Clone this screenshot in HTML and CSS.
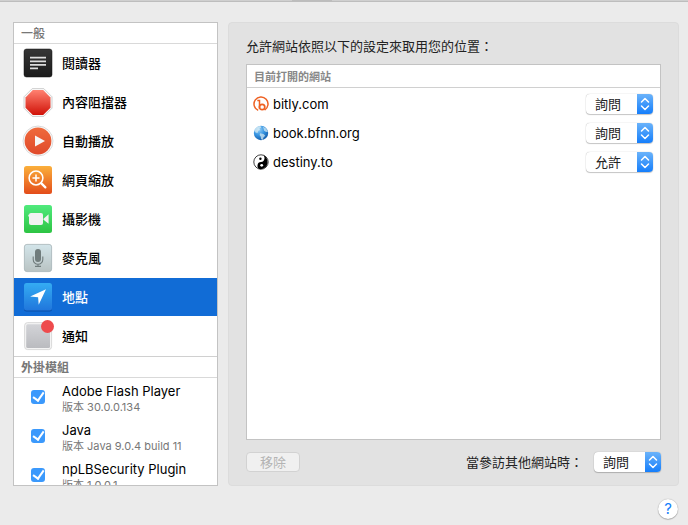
FILE: index.html
```html
<!DOCTYPE html>
<html lang="zh-Hant">
<head>
    <meta charset="UTF-8">
    <meta name="viewport" content="width=device-width, initial-scale=1.0">
    <title>網站</title>
    <link rel="stylesheet" href="styles.css">
</head>
<body>
    <div class="toolbar-edge"><span class="active-tab"></span></div>

    <div class="content">
        <nav class="sidebar">
            <h2 class="section-title">一般</h2>
            <ul class="settings">
                <li><a href="#reader">
                    <svg class="icon" viewBox="0 0 32 32" aria-hidden="true">
                        <defs><linearGradient id="gReader" x2="0" y2="1"><stop offset="0" stop-color="#363636"/><stop offset="1" stop-color="#1b1b1b"/></linearGradient></defs>
                        <rect x="2" y="2" width="28" height="28" rx="2.5" fill="url(#gReader)" stroke="#111" stroke-width=".5"/>
                        <path d="M8 10.7h16M8 14.3h16M8 17.9h16M8 21.4h8" stroke="#dedede" stroke-width="1.7"/>
                    </svg>
                    閱讀器</a></li>
                <li><a href="#blocker">
                    <svg class="icon" viewBox="0 0 32 32" aria-hidden="true">
                        <defs><linearGradient id="gStop" x2="0" y2="1"><stop offset="0" stop-color="#ff8170"/><stop offset="1" stop-color="#d01208"/></linearGradient></defs>
                        <path d="M10.2 2.6h11.6l8.2 8.2v11.4l-8.2 8.2H10.2L2 22.2V10.8z" fill="#fafafa" stroke="#c4c4c4" stroke-width=".8"/>
                        <path d="M10.8 4.1h10.4l7.3 7.3v10.3L21.2 29H10.8l-7.3-7.3V11.4z" fill="url(#gStop)"/>
                    </svg>
                    內容阻擋器</a></li>
                <li><a href="#autoplay">
                    <svg class="icon" viewBox="0 0 32 32" aria-hidden="true">
                        <defs><linearGradient id="gPlay" x2="0" y2="1"><stop offset="0" stop-color="#ef6a3c"/><stop offset="1" stop-color="#e04a2b"/></linearGradient></defs>
                        <circle cx="16" cy="16" r="15" fill="#fafafa" stroke="#d2d2d2" stroke-width=".8"/>
                        <circle cx="16" cy="16" r="13.4" fill="url(#gPlay)"/>
                        <path d="M13 10.5v11l10-5.5z" fill="#f6f6f6"/>
                    </svg>
                    自動播放</a></li>
                <li><a href="#zoom">
                    <svg class="icon" viewBox="0 0 32 32" aria-hidden="true">
                        <defs><linearGradient id="gZoom" x2="0" y2="1"><stop offset="0" stop-color="#fbb03b"/><stop offset="1" stop-color="#e34c1a"/></linearGradient></defs>
                        <rect x="2" y="2" width="28" height="28" rx="2.5" fill="url(#gZoom)"/>
                        <g fill="none" stroke="#fff" stroke-linecap="round">
                            <circle cx="14" cy="14" r="6.9" stroke-width="1.5"/>
                            <path d="M14 11v6M11 14h6" stroke-width="1.5"/>
                            <path d="M19.4 19.4l4 4" stroke-width="2.2"/>
                        </g>
                    </svg>
                    網頁縮放</a></li>
                <li><a href="#camera">
                    <svg class="icon" viewBox="0 0 32 32" aria-hidden="true">
                        <defs><linearGradient id="gCam" x2="0" y2="1"><stop offset="0" stop-color="#50ea7d"/><stop offset="1" stop-color="#2dc443"/></linearGradient></defs>
                        <rect x="2" y="2" width="28" height="28" rx="2.5" fill="url(#gCam)"/>
                        <rect x="7" y="10" width="14" height="12" rx="2" fill="#f2f2f2"/>
                        <path d="M6.3 11.8h2v1.6h-2zM21.5 15.7l5.1-4.5v9.6l-5.1-4.1z" fill="#f2f2f2"/>
                    </svg>
                    攝影機</a></li>
                <li><a href="#microphone">
                    <svg class="icon" viewBox="0 0 32 32" aria-hidden="true">
                        <defs><linearGradient id="gMic" x2="0" y2="1"><stop offset="0" stop-color="#d3e5ea"/><stop offset="1" stop-color="#b9c3c3"/></linearGradient></defs>
                        <rect x="2.4" y="2.4" width="27.2" height="27.2" rx="2.5" fill="url(#gMic)" stroke="#a4b3b6" stroke-width=".8"/>
                        <rect x="13" y="7" width="6" height="13" rx="3" fill="#707c7c"/>
                        <path d="M11.2 14.5v3a4.8 4.8 0 0 0 9.6 0v-3M16 22.3v2M13 24.4h6" fill="none" stroke="#707c7c" stroke-width="1.1"/>
                    </svg>
                    麥克風</a></li>
                <li><a class="selected" href="#location" aria-current="page">
                    <svg class="icon" viewBox="0 0 32 32" aria-hidden="true">
                        <defs><linearGradient id="gLoc" x2="0" y2="1"><stop offset="0" stop-color="#34acf3"/><stop offset="1" stop-color="#2076dc"/></linearGradient></defs>
                        <rect x="2" y="2.6" width="28" height="28" rx="2.5" fill="#0b4ea6"/>
                        <rect x="2" y="2" width="28" height="27.6" rx="2.5" fill="url(#gLoc)"/>
                        <path d="M24 8.2L8.2 15.5l7.9.8.6 7.5z" fill="#fff"/>
                    </svg>
                    地點</a></li>
                <li><a href="#notifications">
                    <svg class="icon" viewBox="0 0 32 32" aria-hidden="true">
                        <defs><linearGradient id="gNote" x2="0" y2="1"><stop offset="0" stop-color="#d3d4d8"/><stop offset="1" stop-color="#babbbf"/></linearGradient></defs>
                        <rect x="2.6" y="2.6" width="27" height="27" rx="3" fill="#f4f4f4" stroke="#d0d0d0" stroke-width=".8"/>
                        <rect x="4.2" y="4.2" width="23.8" height="23.8" rx="1.5" fill="url(#gNote)"/>
                        <circle cx="25.5" cy="6.5" r="6.5" fill="#ee4b4d"/>
                    </svg>
                    通知</a></li>
            </ul>

            <h2 class="section-title divided">外掛模組</h2>
            <ul class="plugins">
                <li>
                    <input type="checkbox" id="flash" checked>
                    <label for="flash">Adobe Flash Player<small>版本 30.0.0.134</small></label>
                </li>
                <li>
                    <input type="checkbox" id="java" checked>
                    <label for="java">Java<small>版本 Java 9.0.4 build 11</small></label>
                </li>
                <li>
                    <input type="checkbox" id="nplb" checked>
                    <label for="nplb">npLBSecurity Plugin<small>版本 1.0.0.1</small></label>
                </li>
            </ul>
        </nav>

        <main class="panel">
            <h1>允許網站依照以下的設定來取用您的位置：</h1>

            <div class="site-list">
                <table>
                    <thead>
                        <tr><th colspan="2">目前打開的網站</th></tr>
                    </thead>
                    <tbody>
                        <tr>
                            <td>
                                <label class="site" for="bitly">
                                    <svg class="favicon" viewBox="0 0 16 16" aria-hidden="true">
                                        <g fill="none" stroke="#ee6123">
                                            <path d="M5.2 14.4A7 7 0 1 1 11.6 14" stroke-width="1.5"/>
                                            <path d="M4.3 4.5h2.2v8.2" stroke-width="1.5"/>
                                            <circle cx="9.1" cy="11" r="2.7" stroke-width="1.7"/>
                                        </g>
                                    </svg>
                                    bitly.com
                                </label>
                            </td>
                            <td><span class="popup"><select id="bitly"><option>詢問</option><option>拒絕</option><option>允許</option></select><svg viewBox="0 0 16 20" aria-hidden="true"><path d="M4.5 8L8 4.5 11.500 8M4.500 12L8 15.500 11.500 12"/></svg></span></td>
                        </tr>
                        <tr>
                            <td>
                                <label class="site" for="book">
                                    <svg class="favicon" viewBox="0 0 16 16" aria-hidden="true">
                                        <defs><radialGradient id="gGlobe" cx=".35" cy=".25" r=".8"><stop offset="0" stop-color="#9bd3f8"/><stop offset=".5" stop-color="#3795e2"/><stop offset="1" stop-color="#125ba9"/></radialGradient></defs>
                                        <circle cx="8" cy="8" r="7.2" fill="url(#gGlobe)"/>
                                        <path d="M1.3 5.5C2.2 2.9 4.8 1 7.4 1l.8 1.5-1.8 1 .6 1.6-1.7.6L4.5 8l-2-.4zM7.3 8.2l3.2.8 1.8 1.7-1.7 1.6-1 2.6-1.6-.9-.2-2.3-1.3-1.6zM10 1.7l3.2 1.8 1.7 3.3-1.8.2-2-1.3-.4-1.8z" fill="#dff0f4" opacity=".7"/>
                                    </svg>
                                    book.bfnn.org
                                </label>
                            </td>
                            <td><span class="popup"><select id="book"><option>詢問</option><option>拒絕</option><option>允許</option></select><svg viewBox="0 0 16 20" aria-hidden="true"><path d="M4.5 8L8 4.5 11.500 8M4.500 12L8 15.500 11.500 12"/></svg></span></td>
                        </tr>
                        <tr>
                            <td>
                                <label class="site" for="destiny">
                                    <svg class="favicon" viewBox="0 0 16 16" aria-hidden="true">
                                        <circle cx="8" cy="8" r="7.2" fill="#fff" stroke="#111" stroke-width=".8"/>
                                        <path d="M9 .8A7.300 7.300 0 0 1 7 15.200 3.700 3.700 0 0 1 8 8 3.700 3.700 0 0 0 9 .8z" fill="#000"/>
                                        <circle cx="7.400" cy="4.700" r="1.200" fill="#000"/>
                                        <circle cx="8.700" cy="11.300" r="1.400" fill="#fff"/>
                                    </svg>
                                    destiny.to
                                </label>
                            </td>
                            <td><span class="popup"><select id="destiny"><option>允許</option><option>詢問</option><option>拒絕</option></select><svg viewBox="0 0 16 20" aria-hidden="true"><path d="M4.5 8L8 4.5 11.500 8M4.500 12L8 15.500 11.500 12"/></svg></span></td>
                        </tr>
                    </tbody>
                </table>
            </div>

            <div class="actions">
                <button type="button" class="remove" disabled>移除</button>
                <label for="others">當參訪其他網站時：</label>
                <span class="popup"><select id="others"><option>詢問</option><option>拒絕</option><option>允許</option></select><svg viewBox="0 0 16 20" aria-hidden="true"><path d="M4.5 8L8 4.5 11.500 8M4.500 12L8 15.500 11.500 12"/></svg></span>
            </div>
        </main>
    </div>

    <footer>
        <button type="button" class="help">?</button>
    </footer>
</body>
</html>
```
FILE: styles.css
```css
* {
    box-sizing: border-box;
}
body {
    display: flex;
    flex-direction: column;
    height: 100vh;
    margin: 0;
    background: #ebebeb;
    color: #000;
    font-family: Inter, "Noto Sans CJK TC", sans-serif;
    font-size: 13px;
    line-height: 18px;
}
h1, h2, ul {
    margin: 0;
    padding: 0;
}
ul {
    list-style: none;
}

/* bottom edge of the window toolbar */
.toolbar-edge {
    flex: none;
    display: flex;
    justify-content: center;
    height: 2px;
    margin-bottom: 20px;
    background: #cfcfcf;
    border-bottom: 1px solid #bdbdbd;
}
.active-tab {
    width: 40px;
    margin-right: 64px;
    background: #bdbdbd;
}

.content {
    flex: 1;
    min-height: 0;
    display: flex;
    gap: 10px;
    padding: 0 9px 0 13px;
}

/* sidebar */
.sidebar {
    flex: none;
    width: 205px;
    overflow: auto;
    scrollbar-width: none;
    background: #fff;
    border: 1px solid #c3c3c3;
}
.section-title {
    height: 21px;
    padding: 0 7px;
    border-bottom: 1px solid #d9d9d9;
    color: #777;
    font-size: 12px;
    font-weight: 500;
    line-height: 22px;
}
.section-title.divided {
    height: 22px;
    border-top: 1px solid #d0d0d0;
    font-weight: 700;
}
.settings a {
    display: flex;
    align-items: center;
    gap: 8px;
    height: 38px;
    margin-bottom: 1px;
    padding-left: 8px;
    color: #000;
    font-weight: 500;
    text-decoration: none;
}
.settings a.selected {
    background: #116cd6;
    color: #fff;
}
.icon {
    flex: none;
    width: 32px;
    height: 32px;
}
.plugins li {
    display: flex;
    align-items: center;
    gap: 17px;
    height: 39px;
    padding-left: 17px;
}
.plugins small {
    display: block;
    color: #777;
    font-size: 11px;
    line-height: 14px;
}
input[type="checkbox"] {
    appearance: none;
    flex: none;
    width: 14px;
    height: 14px;
    margin: 0 0 2px;
    border-radius: 3px;
    background: #3b99fc;
    display: grid;
    place-items: center;
}
input[type="checkbox"]:checked::before {
    content: "";
    width: 5px;
    height: 9px;
    margin-bottom: 2px;
    border: solid #fff;
    border-width: 0 2px 2px 0;
    transform: rotate(35deg);
}

/* right panel */
.panel {
    flex: 1;
    min-width: 0;
    display: flex;
    flex-direction: column;
    padding: 14px 17px 13px;
    background: #e2e2e2;
    border: 1px solid #dcdcdc;
    border-radius: 4px;
}
h1 {
    margin-bottom: 9px;
    font-size: 13px;
    font-weight: 400;
    color: #222;
}
.site-list {
    flex: 1;
    min-height: 0;
    overflow: auto;
    background: #fff;
    border: 1px solid #c3c3c3;
}
table {
    width: 100%;
    border-collapse: separate;
    border-spacing: 0;
}
th {
    height: 23px;
    padding: 2px 7px 0;
    border-bottom: 1px solid #d0d0d0;
    color: #888;
    font-size: 11px;
    font-weight: 700;
    text-align: left;
}
tbody td {
    height: 29px;
    padding: 2px 6px 0;
}
tbody td:last-child {
    width: 80px;
}
.site {
    display: flex;
    align-items: center;
    gap: 4px;
}
.favicon {
    width: 16px;
    height: 16px;
}

.popup {
    display: flex;
    width: 67px;
    height: 20px;
    border-radius: 4px;
    background: #fff;
    box-shadow: 0 0 1px rgba(0, 0, 0, 0.35), 0 1px 1px rgba(0, 0, 0, 0.2);
    overflow: hidden;
}
.popup select {
    appearance: none;
    flex: 1;
    min-width: 0;
    padding: 0 0 0 9px;
    border: 0;
    background: none;
    color: #222;
    font: inherit;
}
.popup svg {
    flex: none;
    width: 16px;
    height: 20px;
    background: linear-gradient(#6bb3fa, #157efb);
    fill: none;
    stroke: #fff;
    stroke-width: 1.5;
    stroke-linecap: round;
    stroke-linejoin: round;
}

.actions {
    display: flex;
    align-items: center;
    gap: 11px;
    margin-top: 12px;
    color: #222;
}
.remove {
    width: 54px;
    height: 20px;
    margin-right: auto;
    padding: 0;
    border: 1px solid #d2d2d2;
    border-radius: 4px;
    background: #f0f0f0;
    color: #b4b4b4;
    font: inherit;
    line-height: 18px;
}

footer {
    flex: none;
    display: flex;
    justify-content: flex-end;
    padding: 13px 10px 6px;
}
.help {
    width: 20px;
    height: 20px;
    padding: 0;
    border: 0;
    border-radius: 50%;
    background: #fff;
    box-shadow: 0 0 1px rgba(0, 0, 0, 0.4), 0 1px 1px rgba(0, 0, 0, 0.2);
    color: #157efb;
    font: inherit;
    font-size: 15px;
    line-height: 20px;
}
```
